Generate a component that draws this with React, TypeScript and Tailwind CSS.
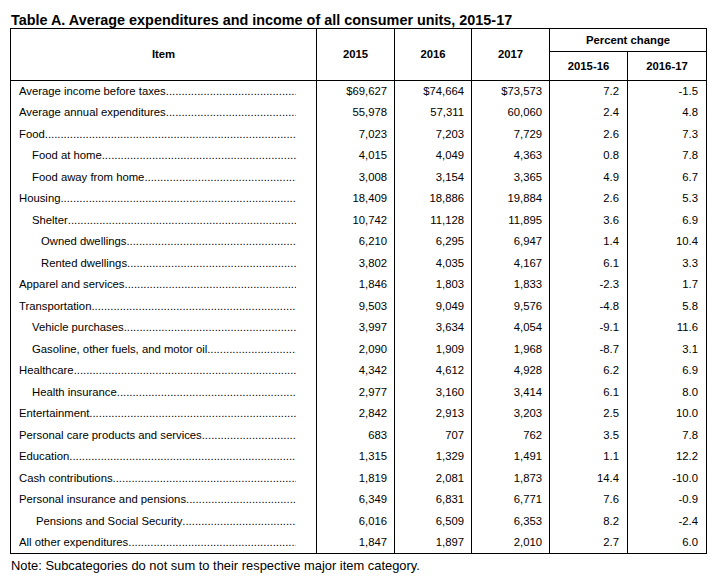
import React from 'react';

type Row = {
  item: string;
  indent?: 0 | 1 | 2 | 3;
  y15: string;
  y16: string;
  y17: string;
  p1: string;
  p2: string;
};

const rows: Row[] = [
  { item: 'Average income before taxes', y15: '$69,627', y16: '$74,664', y17: '$73,573', p1: '7.2', p2: '-1.5' },
  { item: 'Average annual expenditures', y15: '55,978', y16: '57,311', y17: '60,060', p1: '2.4', p2: '4.8' },
  { item: 'Food', y15: '7,023', y16: '7,203', y17: '7,729', p1: '2.6', p2: '7.3' },
  { item: 'Food at home', indent: 1, y15: '4,015', y16: '4,049', y17: '4,363', p1: '0.8', p2: '7.8' },
  { item: 'Food away from home', indent: 1, y15: '3,008', y16: '3,154', y17: '3,365', p1: '4.9', p2: '6.7' },
  { item: 'Housing', y15: '18,409', y16: '18,886', y17: '19,884', p1: '2.6', p2: '5.3' },
  { item: 'Shelter', indent: 1, y15: '10,742', y16: '11,128', y17: '11,895', p1: '3.6', p2: '6.9' },
  { item: 'Owned dwellings', indent: 2, y15: '6,210', y16: '6,295', y17: '6,947', p1: '1.4', p2: '10.4' },
  { item: 'Rented dwellings', indent: 2, y15: '3,802', y16: '4,035', y17: '4,167', p1: '6.1', p2: '3.3' },
  { item: 'Apparel and services', y15: '1,846', y16: '1,803', y17: '1,833', p1: '-2.3', p2: '1.7' },
  { item: 'Transportation', y15: '9,503', y16: '9,049', y17: '9,576', p1: '-4.8', p2: '5.8' },
  { item: 'Vehicle purchases', indent: 1, y15: '3,997', y16: '3,634', y17: '4,054', p1: '-9.1', p2: '11.6' },
  { item: 'Gasoline, other fuels, and motor oil', indent: 1, y15: '2,090', y16: '1,909', y17: '1,968', p1: '-8.7', p2: '3.1' },
  { item: 'Healthcare', y15: '4,342', y16: '4,612', y17: '4,928', p1: '6.2', p2: '6.9' },
  { item: 'Health insurance', indent: 1, y15: '2,977', y16: '3,160', y17: '3,414', p1: '6.1', p2: '8.0' },
  { item: 'Entertainment', y15: '2,842', y16: '2,913', y17: '3,203', p1: '2.5', p2: '10.0' },
  { item: 'Personal care products and services', y15: '683', y16: '707', y17: '762', p1: '3.5', p2: '7.8' },
  { item: 'Education', y15: '1,315', y16: '1,329', y17: '1,491', p1: '1.1', p2: '12.2' },
  { item: 'Cash contributions', y15: '1,819', y16: '2,081', y17: '1,873', p1: '14.4', p2: '-10.0' },
  { item: 'Personal insurance and pensions', y15: '6,349', y16: '6,831', y17: '6,771', p1: '7.6', p2: '-0.9' },
  { item: 'Pensions and Social Security', indent: 3, y15: '6,016', y16: '6,509', y17: '6,353', p1: '8.2', p2: '-2.4' },
  { item: 'All other expenditures', y15: '1,847', y16: '1,897', y17: '2,010', p1: '2.7', p2: '6.0' },
];

const indentClass = ['pl-[8px]', 'pl-[21px]', 'pl-[30px]', 'pl-[25px]'];

// leader dots, clipped by the cell
const dots = '.'.repeat(90);

export default function App() {
  return (
    <div className="w-[717px] h-[579px] bg-white text-black font-['Liberation_Sans',Arial,sans-serif]">
      <div className="pl-[11px] pt-[12px] text-[14.4px] leading-[16px] font-bold">
        Table A. Average expenditures and income of all consumer units, 2015-17
      </div>
      <table className="ml-[10px] w-[696px] table-fixed border-collapse border border-black text-[11.3px] leading-[13px]">
        <colgroup>
          <col className="w-[306px]" />
          <col className="w-[78px]" />
          <col className="w-[77px]" />
          <col className="w-[78px]" />
          <col className="w-[78px]" />
          <col className="w-[79px]" />
        </colgroup>
        <thead>
          <tr className="h-[23px]">
            <th rowSpan={2} className="border border-black font-bold text-center align-middle">Item</th>
            <th rowSpan={2} className="border border-black font-bold text-center align-middle">2015</th>
            <th rowSpan={2} className="border border-black font-bold text-center align-middle">2016</th>
            <th rowSpan={2} className="border border-black font-bold text-center align-middle">2017</th>
            <th colSpan={2} className="border border-black font-bold text-center align-middle">Percent change</th>
          </tr>
          <tr className="h-[29px]">
            <th className="border border-black font-bold text-center align-middle">2015-16</th>
            <th className="border border-black font-bold text-center align-middle">2016-17</th>
          </tr>
        </thead>
        <tbody>
          {rows.map((r) => (
            <tr key={r.item} className="h-[21.5px]">
              <td className={`border-x border-black p-0 pr-[20px] ${indentClass[r.indent ?? 0]}`}>
                <div className="flex whitespace-nowrap">
                  <span>{r.item}</span>
                  <span className="flex-1 overflow-hidden">{dots}</span>
                </div>
              </td>
              <td className="border-x border-black p-0 pr-[7px] text-right">{r.y15}</td>
              <td className="border-x border-black p-0 pr-[7px] text-right">{r.y16}</td>
              <td className="border-x border-black p-0 pr-[7px] text-right">{r.y17}</td>
              <td className="border-x border-black p-0 pr-[8px] text-right">{r.p1}</td>
              <td className="border-x border-black p-0 pr-[8px] text-right">{r.p2}</td>
            </tr>
          ))}
        </tbody>
      </table>
      <div className="pl-[11px] pt-[4px] text-[12.9px] leading-[15px]">
        Note: Subcategories do not sum to their respective major item category.
      </div>
    </div>
  );
}
